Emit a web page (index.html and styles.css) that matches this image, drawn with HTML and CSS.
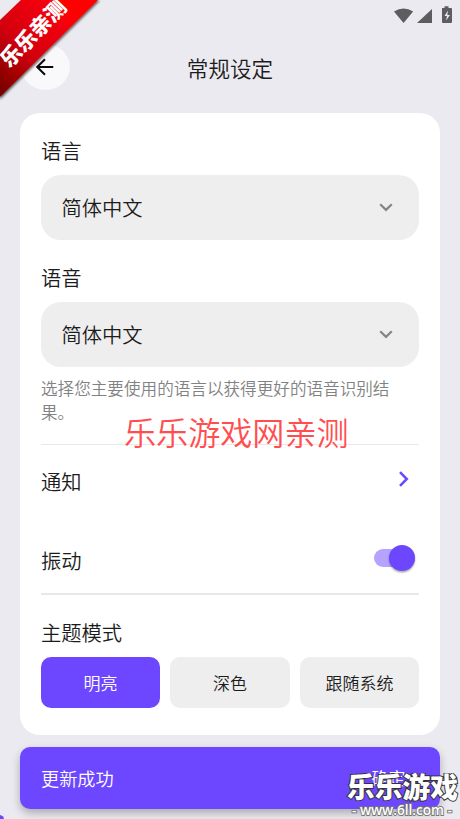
FILE: index.html
```
<!DOCTYPE html>
<html lang="zh-CN">
<head>
<meta charset="utf-8">
<title>常规设定</title>
<link rel="stylesheet" href="styles.css">
</head>
<body>
<div class="screen">
  <div class="status">
    <svg width="60" height="20" viewBox="0 0 60 20" fill="#5d5d60">
      <path d="M1 5.2Q11-1 21 5.2L11 17.3Z" transform="translate(0 1.5) scale(.96)"/>
      <path d="M39 4V18H24Z"/>
      <path d="M49 3h2.500V1.200h4V3H58q1 0 1 1v13q0 1-1 1h-8q-1 0-1-1Z"/>
      <path d="M55 5.500L51.500 11H54L53 15.500L57 10H54.300Z" fill="#ebeaf1"/>
    </svg>
  </div>
  <header class="header">
    <div class="back">
      <svg width="24" height="24" viewBox="0 0 24 24" fill="none" stroke="#080808" stroke-width="2.200"><path d="M21 12H4M12 3.500L3.500 12L12 20.500"/></svg>
    </div>
    <h1 class="title">常规设定</h1>
    <div class="spacer"></div>
  </header>
  <main class="card">
    <div class="label">语言</div>
    <div class="select"><span>简体中文</span><svg width="14" height="10" viewBox="0 0 14 10" fill="none" stroke="#858585" stroke-width="2.2"><path d="M1.200 2.200L7 7.900L12.800 2.200"/></svg></div>
    <div class="label voice">语音</div>
    <div class="select"><span>简体中文</span><svg width="14" height="10" viewBox="0 0 14 10" fill="none" stroke="#858585" stroke-width="2.2"><path d="M1.200 2.200L7 7.900L12.800 2.200"/></svg></div>
    <p class="hint">选择您主要使用的语言以获得更好的语音识别结果。</p>
    <hr class="divider">
    <div class="row notify"><span>通知</span><svg width="12" height="16" viewBox="0 0 12 16" fill="none" stroke="#6d47ff" stroke-width="2.5"><path d="M2 1.200L8.800 8L2 14.800"/></svg></div>
    <div class="row vibrate"><span>振动</span><div class="switch"><div class="knob"></div></div></div>
    <hr class="divider">
    <div class="label theme">主题模式</div>
    <div class="modes"><div class="mode active">明亮</div><div class="mode">深色</div><div class="mode">跟随系统</div></div>
  </main>
  <div class="snackbar"><span>更新成功</span><span class="confirm">确定</span></div>
  <div class="corner"></div>
  <div class="notice">乐乐游戏网亲测</div>
  <svg class="ribbon" width="110" height="110" viewBox="0 0 110 110">
    <defs>
      <linearGradient id="red" gradientUnits="userSpaceOnUse" x1="0" y1="90" x2="75" y2="15"><stop offset="0" stop-color="#790000"/><stop offset=".45" stop-color="#d4000a"/><stop offset="1" stop-color="#ff0006"/></linearGradient>
      <filter id="shade"><feDropShadow dx="1" dy="1.500" stdDeviation="1.2" flood-color="#000" flood-opacity=".6"/></filter>
    </defs>
    <path d="M22-1H99L-1 98V21Z" fill="url(#red)" filter="url(#shade)"/>
    <text class="ribbon-text" transform="translate(33 33) rotate(-46)" text-anchor="middle" y="8">乐乐亲测</text>
  </svg>
  <svg class="brand" width="116" height="50" viewBox="0 0 116 50">
    <text class="brand-name" x="3" y="25" textLength="111" lengthAdjust="spacingAndGlyphs">乐乐游戏</text>
    <text class="brand-url" x="8" y="42" textLength="100" lengthAdjust="spacingAndGlyphs">- www.6ll.com -</text>
  </svg>
</div>
</body>
</html>
```
FILE: styles.css
```
* { box-sizing: border-box; }
body {
  margin: 0;
  background: #ebeaf1;
  color: #1c1c1c;
  font-family: "Noto Sans CJK SC", sans-serif;
  font-weight: 350;
}
svg { display: block; flex: none; }
.screen { position: relative; width: 460px; height: 819px; overflow: hidden; }
.status { height: 44px; padding: 5px 7px 0 0; display: flex; justify-content: flex-end; align-items: flex-start; }
.header { display: flex; align-items: center; justify-content: space-between; padding: 0 20.500px; height: 46px; }
.back { width: 49px; height: 46px; border-radius: 50%; background: #f9f9fc; display: flex; align-items: center; justify-content: center; }
.back svg { width: 22px; height: 22px; }
.spacer { width: 49px; }
.title { margin: 2px 0 0; font-size: 21.600px; line-height: 32px; font-weight: 350; }
.card { margin: 22.600px 20.400px 0; height: 622px; padding: 21px 20.600px 0; background: #fff; border-radius: 20px; }
.label, .select, .row { font-size: 20.300px; }
.label { height: 41px; line-height: 32px; }
.label.voice { margin-top: 21.300px; }
.select { height: 65px; background: #eee; border-radius: 20px; padding: 0 26px 0 20.500px; display: flex; align-items: center; justify-content: space-between; }
.hint { margin: 9px 0 0; height: 50px; font-size: 16.600px; line-height: 24.500px; color: #828282; }
.divider { margin: 18px 0 0; height: 1.500px; border: 0; background: #e8e8e8; }
.row { display: flex; align-items: center; justify-content: space-between; height: 40px; }
.notify { margin-top: 15.500px; padding-right: 9px; }
.notify svg { margin-top: -3px; }
.vibrate { margin-top: 39px; padding-right: 4px; }
.vibrate + .divider { margin-top: 13.500px; }
.switch { width: 41px; height: 18px; margin-top: -3px; border-radius: 9px; background: #b6a3ff; display: flex; align-items: center; justify-content: flex-end; }
.knob { width: 26px; height: 26px; border-radius: 50%; background: #6d47ff; flex: none; box-shadow: 0 1.500px 2px rgba(0,0,0,.35); }
.label.theme { margin-top: 21.500px; }
.modes { display: grid; grid-template-columns: repeat(3, 1fr); gap: 10.300px; }
.mode { height: 51px; border-radius: 10px; background: #eee; display: flex; align-items: center; justify-content: center; font-size: 17px; }
.active { background: #6d47ff; color: #fff; }
.snackbar { margin: 12.500px 20.400px 0; height: 62px; border-radius: 10px; padding: 0 34px 1px 20.600px; background: #6d47ff; color: #fff; display: flex; align-items: center; justify-content: space-between; font-size: 18.200px; box-shadow: 0 4px 8px rgba(0,0,0,.28); }
.confirm { font-size: 17px; }
.corner { position: absolute; left: -5px; bottom: -5px; width: 9px; height: 9px; border-radius: 50%; background: #6d47ff; }
.notice { position: absolute; left: 124px; top: 407px; font-size: 32.100px; line-height: 48px; color: #ff4e50; white-space: nowrap; }
.ribbon { position: absolute; left: 0; top: 0; }
.ribbon-text { font-size: 21px; font-weight: 900; fill: #fff; }
.brand { position: absolute; left: 344px; top: 773px; }
.brand-name { font-size: 28px; font-weight: 900; fill: #fff; stroke: #333; stroke-width: 2px; paint-order: stroke; }
.brand-url { font-family: "Open Sans", sans-serif; font-size: 15px; font-weight: 600; fill: #fff; stroke: #777; stroke-width: 2px; paint-order: stroke; }
```
